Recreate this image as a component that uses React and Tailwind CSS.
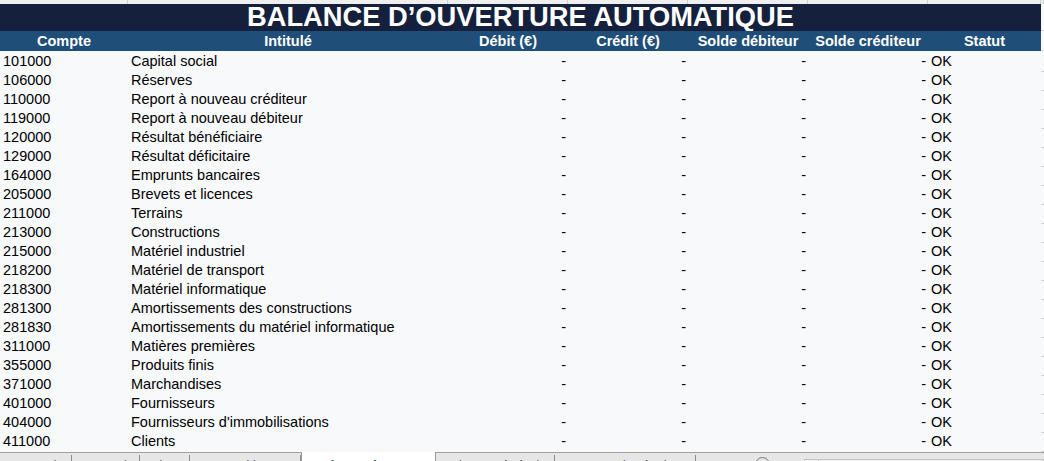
import React from "react";

const rows = [
  ["101000", "Capital social"],
  ["106000", "Réserves"],
  ["110000", "Report à nouveau créditeur"],
  ["119000", "Report à nouveau débiteur"],
  ["120000", "Résultat bénéficiaire"],
  ["129000", "Résultat déficitaire"],
  ["164000", "Emprunts bancaires"],
  ["205000", "Brevets et licences"],
  ["211000", "Terrains"],
  ["213000", "Constructions"],
  ["215000", "Matériel industriel"],
  ["218200", "Matériel de transport"],
  ["218300", "Matériel informatique"],
  ["281300", "Amortissements des constructions"],
  ["281830", "Amortissements du matériel informatique"],
  ["311000", "Matières premières"],
  ["355000", "Produits finis"],
  ["371000", "Marchandises"],
  ["401000", "Fournisseurs"],
  ["404000", "Fournisseurs d'immobilisations"],
  ["411000", "Clients"],
];

const headers = [
  "Compte",
  "Intitulé",
  "Débit (€)",
  "Crédit (€)",
  "Solde débiteur",
  "Solde créditeur",
  "Statut",
];

const tabs = [
  { name: "Accueil", w: "w-[72px]" },
  { name: "Journal", w: "w-[68px]" },
  { name: "Plan", w: "w-[50px]" },
  { name: "Grand livre", w: "w-[111px]" },
  { name: "Balance d'ouverture", w: "w-[135px]", active: true },
  { name: "Balance générale", w: "w-[119px]" },
  { name: "Compte de résultat", w: "w-[141px]" },
];

const cols = "grid grid-cols-[128px_320px_120px_120px_120px_120px_113px_3px]";

export default function App() {
  return (
    <div className="h-[461px] w-[1044px] overflow-hidden bg-[#f8f9fb] font-['Liberation_Sans',Arial,sans-serif] text-black">
      {/* bout de la ligne du dessus */}
      <div className={`${cols} h-[4px] bg-[#efefef]`}>
        {Array.from({ length: 8 }).map((_, i) => (
          <div key={i} className="border-r border-[#d0d0d0]" />
        ))}
      </div>

      {/* Titre */}
      <div className="flex h-[27px]">
        <div className="w-[1041px] bg-[#15203c] text-center text-white font-bold text-[27.3px] leading-[25px] whitespace-nowrap">
          BALANCE D’OUVERTURE AUTOMATIQUE
        </div>
        <div className="w-[3px] border-b border-[#d4d4d4]" />
      </div>

      {/* En-têtes */}
      <div className={`${cols} h-[20px]`}>
        {headers.map((h) => (
          <div
            key={h}
            className="bg-[#1f4e79] text-white font-bold text-[14.5px] leading-[20px] text-center whitespace-nowrap"
          >
            {h}
          </div>
        ))}
        <div className="border-b border-[#d4d4d4]" />
      </div>

      {/* Lignes */}
      {rows.map(([code, label]) => (
        <div key={code} className={`${cols} h-[19px] text-[14.5px] leading-[21px] whitespace-nowrap`}>
          <div className="pl-[3px]">{code}</div>
          <div className="pl-[3px]">{label}</div>
          <div className="text-right pr-[2px]">-</div>
          <div className="text-right pr-[2px]">-</div>
          <div className="text-right pr-[2px]">-</div>
          <div className="text-right pr-[2px]">-</div>
          <div className="pl-[3px]">OK</div>
          <div className="border-b border-[#d4d4d4]" />
        </div>
      ))}
      <div className="h-[2px]" />

      {/* Onglets */}
      <div className="flex h-[40px] bg-[#e6e6e6] font-['Open_Sans',sans-serif] text-[13px] leading-[16px] whitespace-nowrap">
        {tabs.map((t) =>
          t.active ? (
            <div
              key={t.name}
              className={`${t.w} bg-white border-x border-[#9a9a9a] pl-[12px] pt-[5px] text-[#1e7145] font-bold overflow-hidden`}
            >
              {t.name}
            </div>
          ) : (
            <div key={t.name} className={`${t.w} border-t border-[#a0a0a0]`}>
              <div className="mt-[2px] h-full border-r border-[#8c8c8c] pt-[2px] text-center text-[#444] overflow-hidden">
                {t.name}
              </div>
            </div>
          )
        )}
        <div className="flex-1 border-t border-[#a0a0a0] flex items-start">
          <div className="ml-[59px] mt-[4px] w-[15px] h-[15px] rounded-full border border-[#7a7a7a]" />
          <div className="ml-[34px] mt-[6px] flex-1 h-[20px] border border-[#c4c4c4] bg-[#f0f0f0] flex">
            <div className="w-[14px] border-r border-[#c4c4c4]" />
          </div>
        </div>
      </div>
    </div>
  );
}
